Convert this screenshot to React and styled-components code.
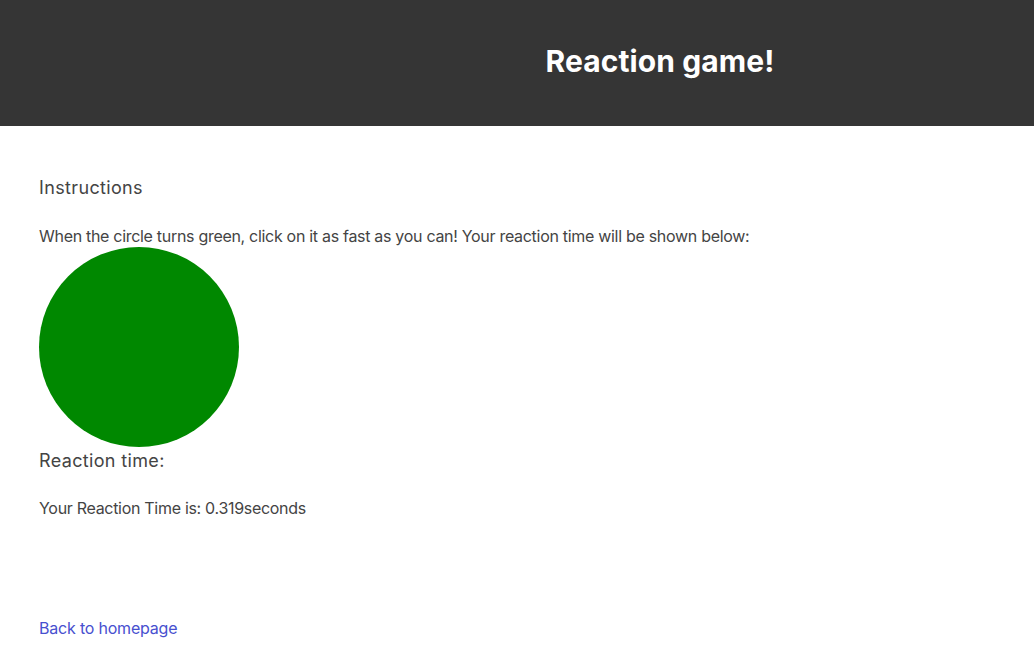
import styled, { createGlobalStyle } from "styled-components";

const GlobalStyle = createGlobalStyle`
  body {
    margin: 0;
    font-family: Inter, "Noto Sans", sans-serif;
    color: #444;
    background: #fff;
  }
`;

const Header = styled.header`
  height: 126px;
  background: #353535;
  display: flex;
  align-items: center;
  justify-content: center;
  padding: 0 0 5px 286px;
  box-sizing: border-box;
  & h1 {
    margin: 0;
    color: #fff;
    font-size: 30px;
    font-weight: 700;
    letter-spacing: 0.1px;
  }
`;

const Main = styled.main`
  padding: 0 39px;
  display: flex;
  flex-direction: column;
  align-items: flex-start;
`;

const Heading = styled.h2`
  font-size: 18px;
  font-weight: 400;
  line-height: normal;
  letter-spacing: 0.35px;
  margin: ${(p) => p.$top}px 0 0;
`;

const Text = styled.p`
  font-size: 16px;
  line-height: normal;
  letter-spacing: -0.3px;
  margin: ${(p) => p.$top}px 0 0;
`;

const Circle = styled.div`
  width: 200px;
  height: 200px;
  border-radius: 50%;
  background: ${(p) => p.$color};
  margin-top: 1px;
  cursor: pointer;
`;

const BackLink = styled.a`
  margin-top: 100px;
  font-size: 16px;
  letter-spacing: -0.2px;
  color: #4750cf;
  text-decoration: none;
`;

const App = () => {
  return (
    <>
      <GlobalStyle />
      <Header>
        <h1>Reaction game!</h1>
      </Header>
      <Main>
        <Heading $top={51}>Instructions</Heading>
        <Text $top={28}>
          When the circle turns green, click on it as fast as you can! Your
          reaction time will be shown below:
        </Text>
        <Circle $color="#008800" />
        <Heading $top={3}>Reaction time:</Heading>
        <Text $top={27}>Your Reaction Time is: 0.319seconds</Text>
        <BackLink href="#">Back to homepage</BackLink>
      </Main>
    </>
  );
};

export default App;
